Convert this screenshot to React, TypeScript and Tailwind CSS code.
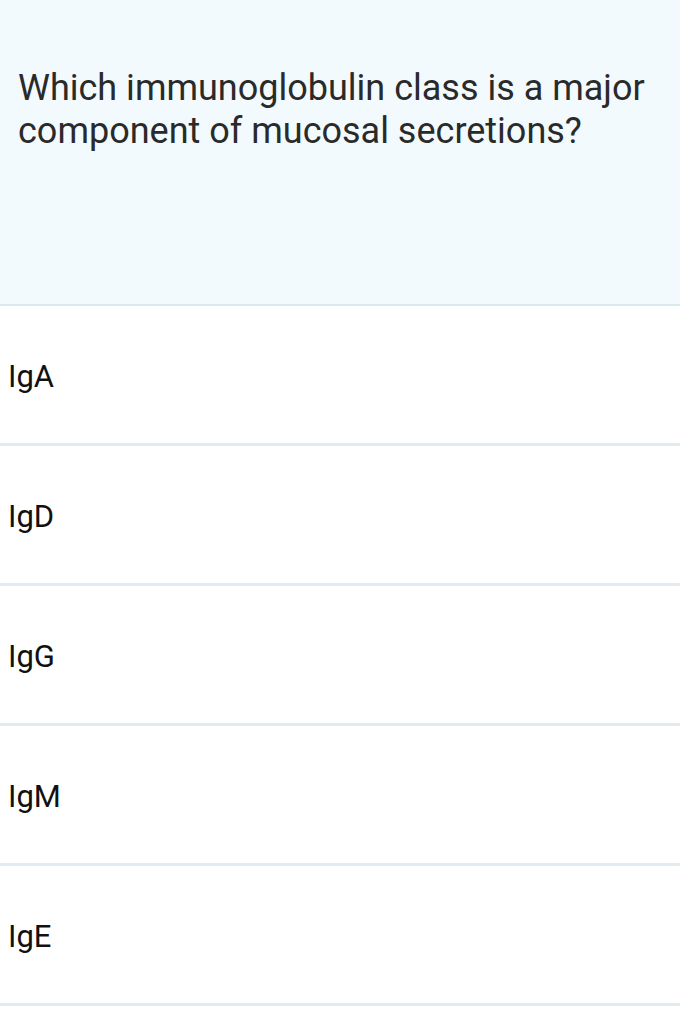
const OPTIONS = ["IgA", "IgD", "IgG", "IgM", "IgE"];

export default function App() {
  return (
    <div className="w-[680px] h-[1018px] bg-white overflow-hidden font-['Roboto','Liberation_Sans',sans-serif]">
      {/* Question */}
      <div className="h-[306px] bg-[#f2fafd] border-b-2 border-[#dbeaee] px-[18px] pt-[67px]">
        <p className="text-[36px] leading-[43px] text-[#2a2a2a]">
          Which immunoglobulin class is a major component of mucosal secretions?
        </p>
      </div>

      {/* Options */}
      {OPTIONS.map((opt) => (
        <div
          key={opt}
          className="h-[140px] border-b-[3px] border-[#e1ecf0] flex items-center px-[8px] pt-[6px]"
        >
          <span className="text-[31px] text-[#111]">{opt}</span>
        </div>
      ))}
    </div>
  );
}
